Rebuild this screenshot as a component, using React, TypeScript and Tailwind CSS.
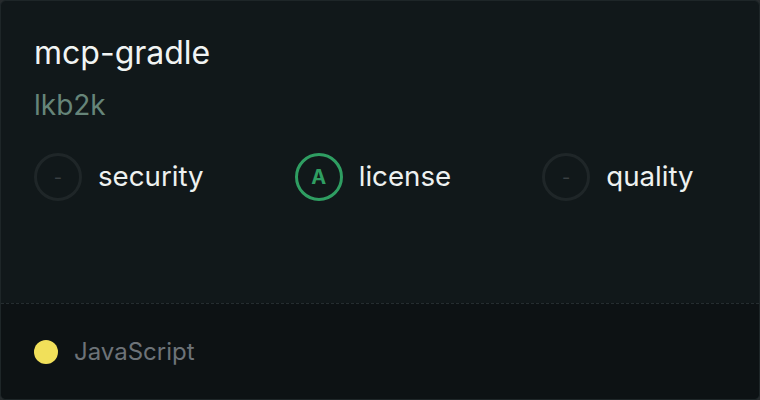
export default function App() {
  const Grade = ({ grade, label, active }: { grade: string; label: string; active?: boolean }) => (
    <div className="flex items-center gap-4">
      <div
        className={
          active
            ? "flex h-12 w-12 items-center justify-center rounded-full border-[3px] border-[#2f9e62] text-[20px] font-bold text-[#2f9e62]"
            : "flex h-12 w-12 items-center justify-center rounded-full border-[3px] border-[#1f2628] text-[18px] text-[#3a4043]"
        }
      >
        {grade}
      </div>
      <span className="text-[27.7px] text-[#eef1f0]">{label}</span>
    </div>
  );

  return (
    <div className="h-[400px] w-[760px] bg-[#262b2d] font-['Inter',sans-serif]">
      <div className="flex h-full w-full flex-col overflow-hidden rounded-md border border-[#1e2628] bg-[#11181a]">
        <div className="flex flex-1 flex-col px-[33px] pt-[32px]">
          <div className="text-[32px] leading-10 text-[#f1f4f3]">mcp-gradle</div>
          <div className="mt-[14px] text-[28px] leading-9 text-[#668579]">lkb2k</div>
          <div className="mt-[30px] flex gap-[91px]">
            <Grade grade="-" label="security" />
            <Grade grade="A" label="license" active />
            <Grade grade="-" label="quality" />
          </div>
        </div>
        <div className="flex h-[96px] items-center gap-4 border-t border-dashed border-[#252d30] bg-[#0d1214] px-[33px]">
          <span className="h-6 w-6 rounded-full bg-[#f1e05a]" />
          <span className="text-[24px] text-[#6d7378]">JavaScript</span>
        </div>
      </div>
    </div>
  );
}
